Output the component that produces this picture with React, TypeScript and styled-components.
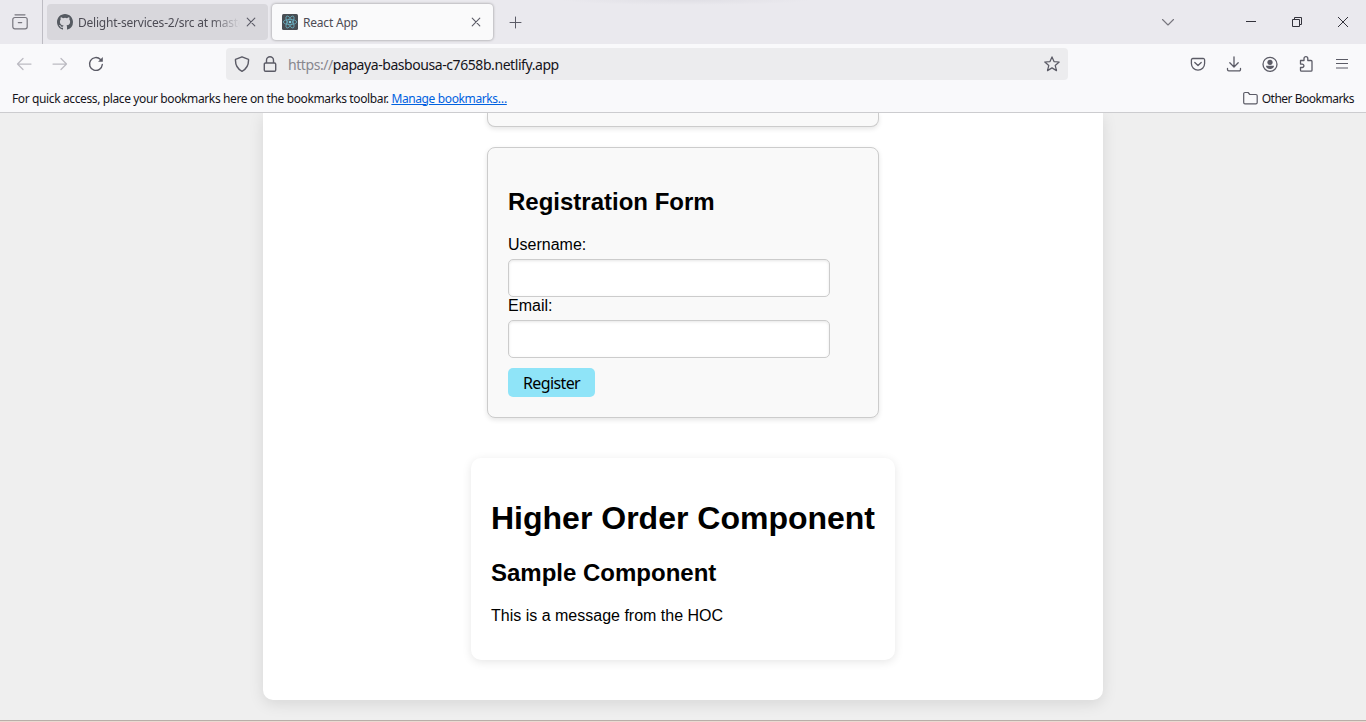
import React from "react";
import styled, { createGlobalStyle } from "styled-components";

const GlobalStyle = createGlobalStyle`
  * { box-sizing: border-box; }
  body { margin: 0; overflow: hidden; background: #efefef; }
`;

const Browser = styled.div`
  width: 1366px;
  height: 722px;
  display: flex;
  flex-direction: column;
  overflow: hidden;
  font-family: "Noto Sans", "Open Sans", sans-serif;
  font-size: 12px;
  color: #15141a;
`;

const TabStrip = styled.header`
  height: 44px;
  flex: none;
  display: flex;
  align-items: center;
  color: #5b5b66;
  background: radial-gradient(ellipse 125px 5px at 686px 0, #e0dfe5, transparent), #eae9ee;
`;

const RecentButton = styled.div`
  width: 43px;
  height: 44px;
  display: flex;
  align-items: center;
  justify-content: center;
  padding-right: 2px;
  border-right: 1px solid #bdbcc3;
  margin-right: 4px;
  color: #77767e;
`;

const Tab = styled.div<{ $active?: boolean }>`
  width: 221px;
  height: 36px;
  display: flex;
  align-items: center;
  padding: 0 12px 0 10px;
  margin-right: 4px;
  border-radius: 4px;
  background: ${(p) => (p.$active ? "#fafafb" : "#d8d7dc")};
  box-shadow: ${(p) => (p.$active ? "0 0 3px rgba(0, 0, 0, 0.4)" : "none")};
`;

const TabTitle = styled.span<{ $fade?: boolean; $spacing: number }>`
  flex: 1;
  margin: 0 6px 0 5px;
  padding-top: 2px;
  line-height: 18px;
  overflow: hidden;
  white-space: nowrap;
  letter-spacing: ${(p) => p.$spacing}px;
  color: #4d4c55;
  mask-image: ${(p) => (p.$fade ? "linear-gradient(to right, #000 82%, transparent)" : "none")};
`;

const NewTab = styled.div`
  display: flex;
  margin-left: 12px;
`;

const WindowControls = styled.div`
  display: flex;
  align-items: center;
  margin-left: auto;
  padding-right: 17px;
  color: #33323b;
`;

const ControlIcon = styled.div<{ $gap: number }>`
  display: flex;
  margin-left: ${(p) => p.$gap}px;
`;

const NavBar = styled.nav`
  height: 40px;
  flex: none;
  display: flex;
  align-items: center;
  padding: 0 16px;
  background: #f9f9fb;
  color: #5b5b66;
`;

const NavButtons = styled.div`
  width: 210px;
  display: flex;
  gap: 20px;
`;

const Dim = styled.div`
  display: flex;
  gap: 20px;
  color: #bcbbc2;
`;

const AddressBar = styled.div`
  width: 842px;
  height: 32px;
  display: flex;
  align-items: center;
  padding: 0 8px;
  border-radius: 4px;
  background: #ececee;
`;

const Url = styled.span`
  flex: 1;
  margin-left: 10px;
  padding-top: 2px;
  font-size: 14px;
  line-height: 20px;
  letter-spacing: -0.43px;
  color: #15141a;
`;

const Scheme = styled.span`
  color: #88878e;
`;

const LockSlot = styled.div`
  display: flex;
  margin-left: 12px;
`;

const Tools = styled.div`
  display: flex;
  gap: 20px;
  margin-left: auto;
`;

const BookmarksBar = styled.div`
  height: 28px;
  flex: none;
  display: flex;
  align-items: center;
  justify-content: space-between;
  padding: 0 12px;
  background: #f9f9fb;
`;

const BookmarkHint = styled.span`
  letter-spacing: -0.38px;
  white-space: nowrap;
`;

const ManageLink = styled.span`
  color: #0061e0;
  text-decoration: underline;
`;

const Folder = styled.div`
  display: flex;
  align-items: center;
  gap: 4px;
  letter-spacing: -0.5px;

  svg {
    color: #5b5b66;
  }
`;

const Viewport = styled.main`
  height: 610px;
  flex: none;
  display: flex;
  justify-content: center;
  align-items: flex-start;
  overflow: hidden;
  border-top: 1px solid #cccccf;
  border-bottom: 1px solid #ead9d1;
  background: linear-gradient(#b9aea9, #b9aea9) bottom / 100% 1px no-repeat padding-box, #efefef;
  font-family: "Liberation Sans", Arial, sans-serif;
  font-size: 16px;
  line-height: 18px;
  color: #000;
`;

const Page = styled.div`
  width: 840px;
  height: 587px;
  display: flex;
  flex-direction: column;
  align-items: center;
  border-radius: 0 0 10px 10px;
  background: #fff;
  box-shadow: 0 4px 15px rgba(0, 0, 0, 0.1);
`;

const cardColors = `
  border: 1px solid #ccc;
  background: #f9f9f9;
  box-shadow: 0 2px 5px rgba(0, 0, 0, 0.1);
`;

const PreviousCard = styled.div`
  ${cardColors}
  width: 392px;
  height: 14px;
  flex: none;
  border-top: none;
  border-radius: 0 0 8px 8px;
`;

const FormCard = styled.form`
  ${cardColors}
  width: 392px;
  height: 271px;
  flex: none;
  margin-top: 20px;
  padding: 20px;
  border-radius: 8px;
`;

const Heading = styled.h2`
  margin: 20px 0 21px;
  font-size: 24px;
  line-height: 27px;
`;

const Field = styled.label`
  display: block;
  height: 61px;
`;

const Input = styled.input`
  display: block;
  width: 322px;
  height: 38px;
  margin-top: 5px;
  padding: 8px;
  border: 1px solid #ccc;
  border-radius: 5px;
  background: #fff;
  box-shadow: inset 0 1px 3px rgba(0, 0, 0, 0.1);
`;

const RegisterButton = styled.button`
  display: block;
  width: 87px;
  height: 29px;
  margin-top: 10px;
  padding: 1px 0 0;
  border: none;
  border-radius: 5px;
  background: #8fe4f8;
  font-family: "Noto Sans", sans-serif;
  font-size: 16px;
  line-height: 28px;
  letter-spacing: -0.6px;
  color: #000;
`;

const HocCard = styled.section`
  width: 424px;
  height: 202px;
  flex: none;
  margin-top: 40px;
  padding: 20px;
  border-radius: 10px;
  background: #fff;
  box-shadow: 0 2px 10px rgba(0, 0, 0, 0.1);
`;

const HocTitle = styled.h1`
  margin: 22px 0;
  font-size: 32px;
  line-height: 37px;
  white-space: nowrap;
`;

const Message = styled.p`
  margin: 0;
`;

type IconProps = { size?: number; stroke?: number; children: React.ReactNode };

const Icon = ({ size = 16, stroke = 1.25, children }: IconProps) => (
  <svg
    width={size}
    height={size}
    viewBox={`0 0 ${size} ${size}`}
    fill="none"
    stroke="currentColor"
    strokeWidth={stroke}
    strokeLinecap="round"
    strokeLinejoin="round"
  >
    {children}
  </svg>
);

const CloseIcon = () => (
  <Icon size={10} stroke={1.1}>
    <path d="M1.2 1.2l7.6 7.6M8.8 1.2L1.2 8.8" />
  </Icon>
);

const GithubIcon = () => (
  <svg width="16" height="16" viewBox="0 0 16 16" fill="#555a61">
    <path d="M8 0C3.58 0 0 3.58 0 8c0 3.54 2.29 6.53 5.47 7.59.4.07.55-.17.55-.38 0-.19-.01-.82-.01-1.49-2.01.37-2.53-.49-2.69-.94-.09-.23-.48-.94-.82-1.13-.28-.15-.68-.52-.01-.53.63-.01 1.08.58 1.23.82.72 1.21 1.87.87 2.33.66.07-.52.28-.87.51-1.07-1.78-.2-3.64-.89-3.64-3.95 0-.87.31-1.59.82-2.15-.08-.2-.36-1.02.08-2.12 0 0 .67-.21 2.2.82a7.6 7.6 0 014 0c1.53-1.04 2.2-.82 2.2-.82.44 1.1.16 1.92.08 2.12.51.56.82 1.27.82 2.15 0 3.07-1.87 3.75-3.65 3.95.29.25.54.73.54 1.48 0 1.07-.01 1.93-.01 2.2 0 .21.15.46.55.38A8.01 8.01 0 0016 8c0-4.42-3.58-8-8-8z" />
  </svg>
);

const ReactIcon = () => (
  <svg width="16" height="16" viewBox="0 0 16 16" fill="none" stroke="#68a9ba" strokeWidth="0.85">
    <rect width="16" height="16" rx="1.5" fill="#484d53" stroke="none" />
    <ellipse cx="8" cy="8" rx="6.7" ry="2.6" />
    <ellipse cx="8" cy="8" rx="6.7" ry="2.6" transform="rotate(60 8 8)" />
    <ellipse cx="8" cy="8" rx="6.7" ry="2.6" transform="rotate(120 8 8)" />
    <circle cx="8" cy="8" r="1.3" fill="#83cfe0" stroke="none" />
  </svg>
);

export default function App() {
  return (
    <>
      <GlobalStyle />
      <Browser>
        <TabStrip>
          <RecentButton>
            <Icon stroke={1.2}>
              <path d="M3 .8h10M2.8 3.5h10.4a2 2 0 0 1 2 2v7.3a2 2 0 0 1-2 2H2.8a2 2 0 0 1-2-2V5.500a2 2 0 0 1 2-2zM6.300 8.600h3.400" />
            </Icon>
          </RecentButton>
          <Tab>
            <GithubIcon />
            <TabTitle $fade $spacing={-0.22}>Delight-services-2/src at maste</TabTitle>
            <CloseIcon />
          </Tab>
          <Tab $active>
            <ReactIcon />
            <TabTitle $spacing={-0.2}>React App</TabTitle>
            <CloseIcon />
          </Tab>
          <NewTab>
            <Icon size={13} stroke={1}>
              <path d="M6.500 1v11M1 6.500h11" />
            </Icon>
          </NewTab>
          <WindowControls>
            <ControlIcon $gap={0}>
              <Icon size={14} stroke={1.1}>
                <path d="M1.500 4.500L7 10l5.500-5.500" stroke="#77767e" />
              </Icon>
            </ControlIcon>
            <ControlIcon $gap={70}>
              <svg width="12" height="12" stroke="currentColor">
                <path d="M1 5.500h10" />
              </svg>
            </ControlIcon>
            <ControlIcon $gap={34}>
              <svg width="12" height="12" fill="none" stroke="currentColor">
                <path d="M1.500 3.500h7v7h-7zM3.500 3.500v-2h7v7h-2" />
              </svg>
            </ControlIcon>
            <ControlIcon $gap={34}>
              <svg width="12" height="12" stroke="currentColor">
                <path d="M1 1l10 10M11 1L1 11" />
              </svg>
            </ControlIcon>
          </WindowControls>
        </TabStrip>

        <NavBar>
          <NavButtons>
            <Dim>
              <Icon>
                <path d="M15 8H1.500M7 2.500L1.500 8L7 13.500" />
              </Icon>
              <Icon>
                <path d="M1 8h13.500M9 2.500L14.500 8L9 13.500" />
              </Icon>
            </Dim>
            <Icon stroke={1.4}>
              <path d="M14.300 8.500A6.400 6.400 0 1 1 12.500 3.500" />
              <path d="M14.800 1v4.700h-4.700z" fill="currentColor" stroke="none" />
            </Icon>
          </NavButtons>
          <AddressBar>
            <Icon stroke={1.4}>
              <path d="M8 .8l6.500 2.500c.3 5-1.800 9.500-6.500 12-4.700-2.500-6.800-7-6.500-12z" />
            </Icon>
            <LockSlot>
              <Icon stroke={1.4}>
                <path d="M3.500 7h9a1.200 1.200 0 0 1 1.200 1.200v5.800a1.200 1.200 0 0 1-1.200 1.200h-9a1.200 1.200 0 0 1-1.200-1.200V8.200A1.200 1.200 0 0 1 3.500 7zM4.500 7V4.300a3.500 3.500 0 0 1 7 0V7" />
              </Icon>
            </LockSlot>
            <Url>
              <Scheme>https://</Scheme>papaya-basbousa-c7658b.netlify.app
            </Url>
            <Icon>
              <path d="M8 .9l2 4.700 5.200.4-4 3.400 1.300 5.200L8 11.900l-4.500 2.700 1.300-5.200L.8 6 6 5.600z" />
            </Icon>
          </AddressBar>
          <Tools>
            <Icon stroke={1.3}>
              <path d="M2.800 2.500h10.400a1.400 1.400 0 0 1 1.400 1.400v3.600a6.600 6.600 0 0 1-13.200 0V3.900a1.400 1.400 0 0 1 1.400-1.400zM4.800 6.500L8 9.500l3.200-3" />
            </Icon>
            <Icon stroke={1.3}>
              <path d="M8 .8v10M3.800 6.800L8 11l4.200-4.200M1.500 12.500v1a1.300 1.300 0 0 0 1.300 1.300h10.400a1.300 1.300 0 0 0 1.300-1.300v-1" />
            </Icon>
            <Icon stroke={1.3}>
              <circle cx="8" cy="8.300" r="7" />
              <circle cx="8" cy="6.300" r="2.600" fill="currentColor" stroke="none" />
              <path d="M4 9.800h8c0 1.800-1.500 3.200-4 3.200s-4-1.400-4-3.200z" fill="currentColor" stroke="none" />
            </Icon>
            <Icon stroke={1.3}>
              <path d="M2.500 4.500h3.500V2.600a1.900 1.900 0 0 1 3.800 0V4.500h3.200a1 1 0 0 1 1 1v8.700a1 1 0 0 1-1 1H3.500a1 1 0 0 1-1-1v-2.700h1.700a1.700 1.700 0 0 0 0-3.400H2.500z" />
            </Icon>
            <svg width="16" height="16" stroke="currentColor" strokeWidth="1.200">
              <path d="M2 3.500h12M2 7.500h12M2 12h12" />
            </svg>
          </Tools>
        </NavBar>

        <BookmarksBar>
          <BookmarkHint>
            For quick access, place your bookmarks here on the bookmarks toolbar. <ManageLink>Manage bookmarks…</ManageLink>
          </BookmarkHint>
          <Folder>
            <Icon size={15} stroke={1.2}>
              <path d="M2 1.500h3.100l1.700 2h6.100a1.300 1.300 0 0 1 1.300 1.300v6.700a1.300 1.300 0 0 1-1.300 1.300H2A1.300 1.300 0 0 1 .7 11.500V2.800A1.300 1.300 0 0 1 2 1.500z" />
            </Icon>
            Other Bookmarks
          </Folder>
        </BookmarksBar>

        <Viewport>
          <Page>
            <PreviousCard />
            <FormCard>
              <Heading>Registration Form</Heading>
              <Field>
                Username:
                <Input />
              </Field>
              <Field>
                Email:
                <Input />
              </Field>
              <RegisterButton type="button">Register</RegisterButton>
            </FormCard>
            <HocCard>
              <HocTitle>Higher Order Component</HocTitle>
              <Heading>Sample Component</Heading>
              <Message>This is a message from the HOC</Message>
            </HocCard>
          </Page>
        </Viewport>
      </Browser>
    </>
  );
}
